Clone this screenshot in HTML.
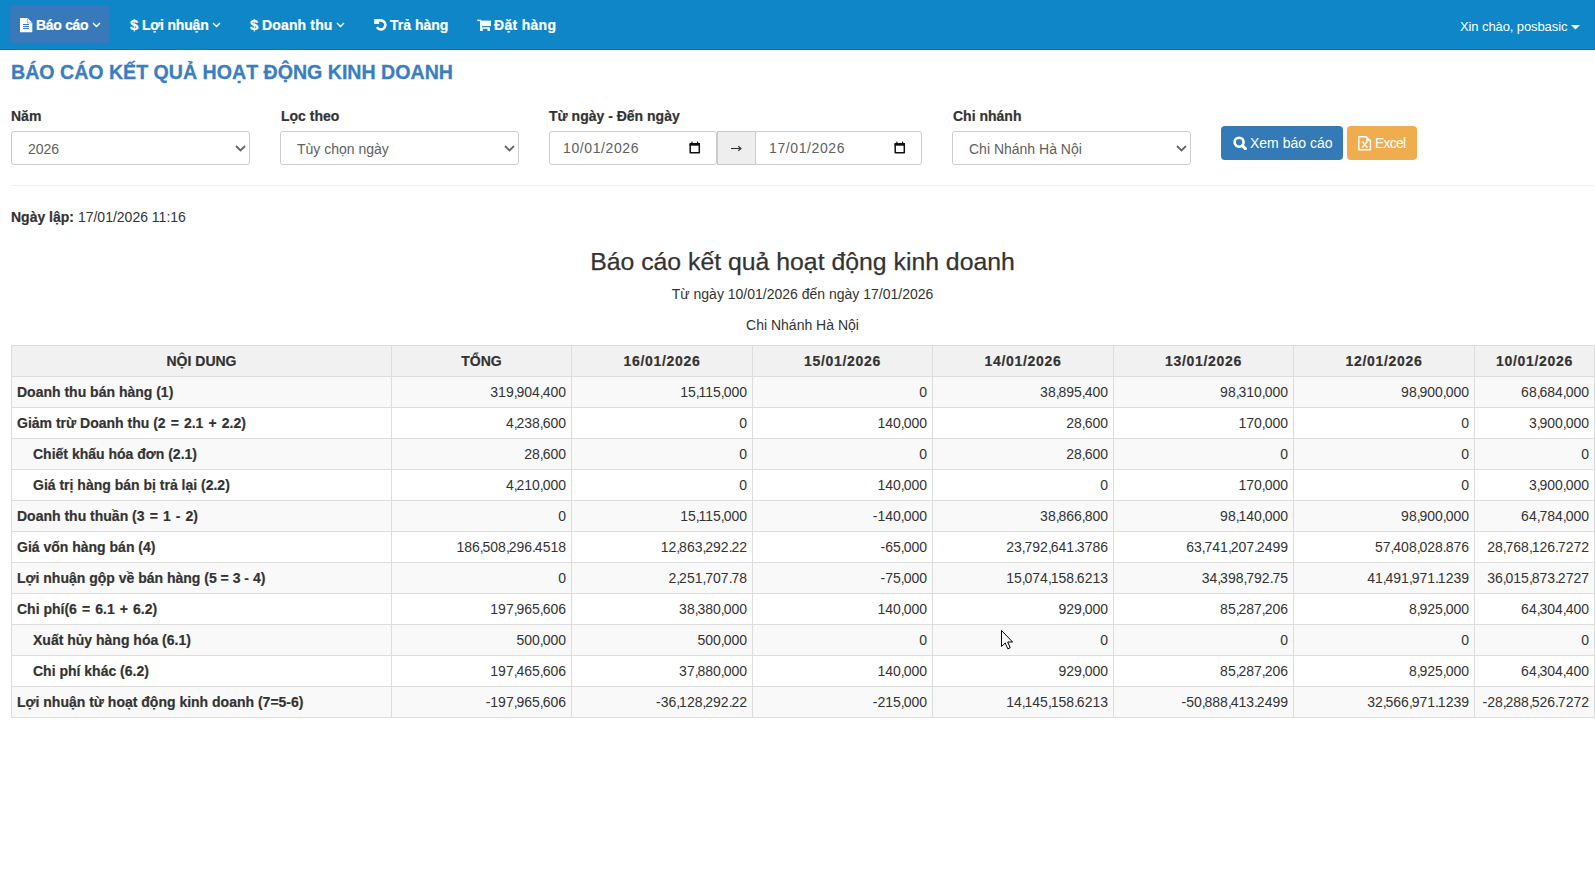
<!DOCTYPE html>
<html><head><meta charset="utf-8">
<style>
*{box-sizing:border-box}
html,body{margin:0;padding:0}
body{width:1595px;height:894px;overflow:hidden;background:#fff;font-family:"Liberation Sans",sans-serif;font-size:14px;color:#333;position:relative}
.a{position:absolute;white-space:nowrap;line-height:1}
.b{font-weight:bold}
.nav{position:absolute;left:0;top:0;width:1595px;height:50px;background:#0e86c8;border-bottom:1px solid #0c76b2}
.act{position:absolute;left:10px;top:6px;width:100px;height:37px;background:#3779ba;border-radius:4px}
.nt{color:#fff;font-weight:bold;font-size:14px;letter-spacing:0;-webkit-text-stroke:0.2px #fff}
.title{color:#3a7ebf;font-weight:bold;font-size:19.6px;-webkit-text-stroke:0.3px #3a7ebf}
.lbl{font-weight:bold;font-size:14px;color:#333;-webkit-text-stroke:0.2px #333}
.sel{position:absolute;top:131px;height:34px;border:1px solid #ccc;border-radius:3px;background:#fff}
.stxt{color:#606060;font-size:14px}
.dt{letter-spacing:0.6px}
.chev{position:absolute;width:11px;height:7px}
.hr{position:absolute;left:11px;top:185px;width:1584px;height:1px;background:#eee}
.btn{position:absolute;top:126px;height:34px;border-radius:4px}
table{position:absolute;left:11px;top:345px;border-collapse:collapse;table-layout:fixed;width:1583px}
td,th{border:1px solid #ddd;height:31px;padding:0 5px;font-size:14px;line-height:1;white-space:nowrap;overflow:hidden}
th{background:#f1f1f1;font-weight:bold;text-align:center;-webkit-text-stroke:0.2px #333}
td{text-align:right}
td.l{text-align:left;font-weight:bold;-webkit-text-stroke:0.2px #333}
td.i{padding-left:21px}
tr.s td{background:#f9f9f9}
.op{margin:0 1.2px}
td i{font-style:normal;letter-spacing:-1.1px}
th.d{letter-spacing:0.7px}
</style></head><body>
<div class="nav"></div>
<div class="act"></div>
<!-- nav icons/text -->
<svg class="a" style="left:20px;top:18px" width="13" height="15" viewBox="0 0 13 15"><path d="M0 0H7.5L12.3 4.8V14.2H0Z" fill="#fff"/><path d="M7.4 0.3V4.9H12.2" stroke="#6f9dcc" stroke-width="0.7" fill="none"/><g shape-rendering="crispEdges" fill="#3779ba"><rect x="3" y="6" width="6" height="1"/><rect x="3" y="8" width="6" height="1"/><rect x="3" y="10" width="6" height="1"/></g></svg>
<div class="a nt" style="left:36px;top:18px;letter-spacing:-0.3px">Báo cáo</div>
<svg class="a" style="left:92px;top:22px" width="9" height="6" viewBox="0 0 9 6"><path d="M1 1L4.5 4.5L8 1" stroke="#fff" stroke-width="1.4" fill="none"/></svg>
<div class="a nt" style="left:130px;top:17px;font-size:15px">$</div><div class="a nt" style="left:142px;top:18px;letter-spacing:-0.2px">Lợi nhuận</div>
<svg class="a" style="left:212px;top:22px" width="9" height="6" viewBox="0 0 9 6"><path d="M1 1L4.5 4.5L8 1" stroke="#fff" stroke-width="1.4" fill="none"/></svg>
<div class="a nt" style="left:250px;top:17px;font-size:15px">$</div><div class="a nt" style="left:262px;top:18px;letter-spacing:0.15px">Doanh thu</div>
<svg class="a" style="left:336px;top:22px" width="9" height="6" viewBox="0 0 9 6"><path d="M1 1L4.5 4.5L8 1" stroke="#fff" stroke-width="1.4" fill="none"/></svg>
<svg class="a" style="left:373px;top:19px" width="15" height="13" viewBox="0 0 15 13"><path d="M7.8 1.35A4.55 4.55 0 1 1 3.9 8.2" stroke="#fff" stroke-width="2.6" fill="none"/><path d="M1.2 0.1H5.2L6.4 5H1.2Z" fill="#fff"/><path d="M3.5 1.35H7.9" stroke="#fff" stroke-width="2.6"/></svg>
<div class="a nt" style="left:390px;top:18px">Trả hàng</div>
<svg class="a" style="left:477px;top:19px" width="15" height="13" viewBox="0 0 15 13"><g fill="#fff"><rect x="0.2" y="0.7" width="3.5" height="1.4"/><rect x="3.1" y="1.6" width="10.9" height="5.5"/><rect x="3.1" y="1.6" width="1.9" height="10.4"/><rect x="4.9" y="8.3" width="8.1" height="1.5"/><rect x="3.1" y="9.8" width="2.7" height="2.2"/><rect x="10.5" y="9.8" width="2.5" height="2.2"/></g></svg>
<div class="a nt" style="left:494px;top:18px;letter-spacing:0.3px">Đặt hàng</div>
<div class="a" style="left:1460px;top:20px;color:#fff;font-size:13px;letter-spacing:-0.1px">Xin chào, posbasic</div>
<svg class="a" style="left:1571px;top:25px" width="9" height="5" viewBox="0 0 9 5"><path d="M0 0H9L4.5 4.5Z" fill="#fff"/></svg>

<div class="a title" style="left:11px;top:63px">BÁO CÁO KẾT QUẢ HOẠT ĐỘNG KINH DOANH</div>

<div class="a lbl" style="left:11px;top:109px">Năm</div>
<div class="a lbl" style="left:281px;top:109px">Lọc theo</div>
<div class="a lbl" style="left:549px;top:109px">Từ ngày - Đến ngày</div>
<div class="a lbl" style="left:953px;top:109px">Chi nhánh</div>

<div class="sel" style="left:11px;width:239px"></div>
<div class="a stxt" style="left:28px;top:142px">2026</div>
<svg class="chev" style="left:235px;top:145px" viewBox="0 0 11 7"><path d="M1 1L5.5 5.5L10 1" stroke="#666" stroke-width="1.8" fill="none"/></svg>

<div class="sel" style="left:280px;width:239px"></div>
<div class="a stxt" style="left:297px;top:142px">Tùy chọn ngày</div>
<svg class="chev" style="left:504px;top:145px" viewBox="0 0 11 7"><path d="M1 1L5.5 5.5L10 1" stroke="#666" stroke-width="1.8" fill="none"/></svg>

<div class="sel" style="left:549px;width:168px"></div>
<div class="a stxt dt" style="left:563px;top:141px">10/01/2026</div>
<svg class="a" style="left:689px;top:141px" width="12" height="13" viewBox="0 0 12 13"><path d="M1.2 3.5H10.3V11.8H1.2Z" stroke="#111" stroke-width="1.5" fill="none" stroke-linejoin="round"/><rect x="0.5" y="2" width="10.5" height="2.6" fill="#111"/><rect x="2.3" y="0.6" width="1.2" height="2" fill="#111"/><rect x="8" y="0.6" width="1.2" height="2" fill="#111"/></svg>
<div class="a" style="left:717px;top:131px;width:39px;height:34px;background:#eee;border:1px solid #c8c8c8"></div>
<svg class="a" style="left:730px;top:145px" width="12" height="8" viewBox="0 0 12 8"><path d="M1 3.5H10.5" stroke="#333" stroke-width="1.1"/><path d="M8.3 1.3L11 3.5L8.3 5.7" stroke="#333" stroke-width="1.1" fill="none"/></svg>
<div class="sel" style="left:755px;width:167px"></div>
<div class="a stxt dt" style="left:769px;top:141px">17/01/2026</div>
<svg class="a" style="left:894px;top:141px" width="12" height="13" viewBox="0 0 12 13"><path d="M1.2 3.5H10.3V11.8H1.2Z" stroke="#111" stroke-width="1.5" fill="none" stroke-linejoin="round"/><rect x="0.5" y="2" width="10.5" height="2.6" fill="#111"/><rect x="2.3" y="0.6" width="1.2" height="2" fill="#111"/><rect x="8" y="0.6" width="1.2" height="2" fill="#111"/></svg>

<div class="sel" style="left:952px;width:239px"></div>
<div class="a stxt" style="left:969px;top:142px">Chi Nhánh Hà Nội</div>
<svg class="chev" style="left:1176px;top:145px" viewBox="0 0 11 7"><path d="M1 1L5.5 5.5L10 1" stroke="#666" stroke-width="1.8" fill="none"/></svg>

<div class="btn" style="left:1221px;width:122px;background:#337ab7"></div>
<svg class="a" style="left:1233px;top:136px" width="14" height="14" viewBox="0 0 14 14"><circle cx="6.1" cy="6.2" r="4.5" stroke="#fff" stroke-width="2.6" fill="none"/><path d="M9.4 9.6L12.4 12.6" stroke="#fff" stroke-width="3" stroke-linecap="round"/></svg>
<div class="a" style="left:1250px;top:136px;color:#fff;font-size:14px">Xem báo cáo</div>
<div class="btn" style="left:1347px;width:70px;background:#f0ad4e"></div>
<svg class="a" style="left:1358px;top:136px" width="14" height="15" viewBox="0 0 14 15"><path d="M0.8 0.7H8.2L12.4 4.9V13.8H0.8Z" stroke="#fff" stroke-width="1.4" fill="none" stroke-linejoin="miter"/><path d="M8.2 0.7V4.9H12.4Z" fill="#fff"/><path d="M4.6 6L8.9 11.2M8.9 6L4.6 11.2" stroke="#fff" stroke-width="1.2"/><path d="M3.6 6H5.8M7.8 6H10M3.6 11.2H5.8M7.8 11.2H10" stroke="#fff" stroke-width="0.9"/></svg>
<div class="a" style="left:1375px;top:136px;color:#fff;font-size:14px;letter-spacing:-0.8px">Excel</div>

<div class="hr"></div>

<div class="a" style="left:11px;top:210px"><b style="-webkit-text-stroke:0.2px #333">Ngày lập:</b> 17/01/2026 11:16</div>

<div class="a" style="left:0;top:250px;width:1605px;text-align:center;font-size:24.8px;-webkit-text-stroke:0.25px #333">Báo cáo kết quả hoạt động kinh doanh</div>
<div class="a" style="left:0;top:287px;width:1605px;text-align:center;font-size:14px">Từ ngày 10/01/2026 đến ngày 17/01/2026</div>
<div class="a" style="left:0;top:318px;width:1605px;text-align:center;font-size:14px">Chi Nhánh Hà Nội</div>

<table>
<colgroup><col style="width:380px"><col style="width:180px"><col style="width:181px"><col style="width:180px"><col style="width:181px"><col style="width:180px"><col style="width:181px"><col style="width:120px"></colgroup>
<tr><th>NỘI DUNG</th><th>TỔNG</th><th class="d">16/01/2026</th><th class="d">15/01/2026</th><th class="d">14/01/2026</th><th class="d">13/01/2026</th><th class="d">12/01/2026</th><th class="d">10/01/2026</th></tr>
<tr class="s"><td class="l">Doanh thu bán hàng (1)</td><td>319<i>,</i>904<i>,</i>400</td><td>15<i>,</i>115<i>,</i>000</td><td>0</td><td>38<i>,</i>895<i>,</i>400</td><td>98<i>,</i>310<i>,</i>000</td><td>98<i>,</i>900<i>,</i>000</td><td>68<i>,</i>684<i>,</i>000</td></tr>
<tr><td class="l">Giảm trừ Doanh thu (2 <span class="op">=</span> 2.1 <span class="op">+</span> 2.2)</td><td>4<i>,</i>238<i>,</i>600</td><td>0</td><td>140<i>,</i>000</td><td>28<i>,</i>600</td><td>170<i>,</i>000</td><td>0</td><td>3<i>,</i>900<i>,</i>000</td></tr>
<tr class="s"><td class="l i">Chiết khấu hóa đơn (2.1)</td><td>28<i>,</i>600</td><td>0</td><td>0</td><td>28<i>,</i>600</td><td>0</td><td>0</td><td>0</td></tr>
<tr><td class="l i">Giá trị hàng bán bị trả lại (2.2)</td><td>4<i>,</i>210<i>,</i>000</td><td>0</td><td>140<i>,</i>000</td><td>0</td><td>170<i>,</i>000</td><td>0</td><td>3<i>,</i>900<i>,</i>000</td></tr>
<tr class="s"><td class="l">Doanh thu thuần (3 <span class="op">=</span> 1 <span class="op">-</span> 2)</td><td>0</td><td>15<i>,</i>115<i>,</i>000</td><td>-140<i>,</i>000</td><td>38<i>,</i>866<i>,</i>800</td><td>98<i>,</i>140<i>,</i>000</td><td>98<i>,</i>900<i>,</i>000</td><td>64<i>,</i>784<i>,</i>000</td></tr>
<tr><td class="l">Giá vốn hàng bán (4)</td><td>186<i>,</i>508<i>,</i>296<i>.</i>4518</td><td>12<i>,</i>863<i>,</i>292<i>.</i>22</td><td>-65<i>,</i>000</td><td>23<i>,</i>792<i>,</i>641<i>.</i>3786</td><td>63<i>,</i>741<i>,</i>207<i>.</i>2499</td><td>57<i>,</i>408<i>,</i>028<i>.</i>876</td><td>28<i>,</i>768<i>,</i>126<i>.</i>7272</td></tr>
<tr class="s"><td class="l">Lợi nhuận gộp về bán hàng (5 = 3 - 4)</td><td>0</td><td>2<i>,</i>251<i>,</i>707<i>.</i>78</td><td>-75<i>,</i>000</td><td>15<i>,</i>074<i>,</i>158<i>.</i>6213</td><td>34<i>,</i>398<i>,</i>792<i>.</i>75</td><td>41<i>,</i>491<i>,</i>971<i>.</i>1239</td><td>36<i>,</i>015<i>,</i>873<i>.</i>2727</td></tr>
<tr><td class="l">Chi phí(6 <span class="op">=</span> 6.1 <span class="op">+</span> 6.2)</td><td>197<i>,</i>965<i>,</i>606</td><td>38<i>,</i>380<i>,</i>000</td><td>140<i>,</i>000</td><td>929<i>,</i>000</td><td>85<i>,</i>287<i>,</i>206</td><td>8<i>,</i>925<i>,</i>000</td><td>64<i>,</i>304<i>,</i>400</td></tr>
<tr class="s"><td class="l i">Xuất hủy hàng hóa (6.1)</td><td>500<i>,</i>000</td><td>500<i>,</i>000</td><td>0</td><td>0</td><td>0</td><td>0</td><td>0</td></tr>
<tr><td class="l i">Chi phí khác (6.2)</td><td>197<i>,</i>465<i>,</i>606</td><td>37<i>,</i>880<i>,</i>000</td><td>140<i>,</i>000</td><td>929<i>,</i>000</td><td>85<i>,</i>287<i>,</i>206</td><td>8<i>,</i>925<i>,</i>000</td><td>64<i>,</i>304<i>,</i>400</td></tr>
<tr class="s"><td class="l">Lợi nhuận từ hoạt động kinh doanh (7=5-6)</td><td>-197<i>,</i>965<i>,</i>606</td><td>-36<i>,</i>128<i>,</i>292<i>.</i>22</td><td>-215<i>,</i>000</td><td>14<i>,</i>145<i>,</i>158<i>.</i>6213</td><td>-50<i>,</i>888<i>,</i>413<i>.</i>2499</td><td>32<i>,</i>566<i>,</i>971<i>.</i>1239</td><td>-28<i>,</i>288<i>,</i>526<i>.</i>7272</td></tr>
</table>

<svg class="a" style="left:1001px;top:630px" width="14" height="20" viewBox="0 0 14 20"><path d="M0.5 0.5V16.5L4.2 13L6.8 18.8L9.2 17.8L6.7 12H11.6Z" fill="#fff" stroke="#000" stroke-width="1" stroke-linejoin="round"/></svg>
</body></html>
